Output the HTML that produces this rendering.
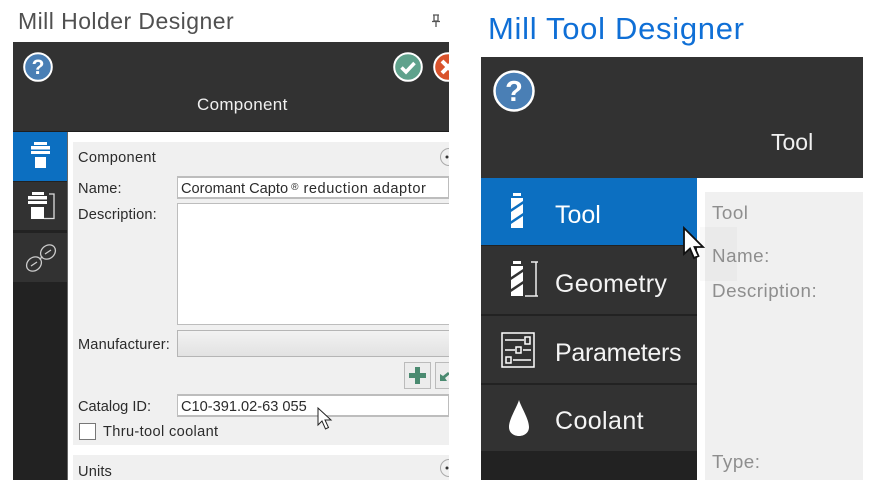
<!DOCTYPE html>
<html><head><meta charset="utf-8">
<style>
html,body{margin:0;padding:0;background:#fff}
#p{position:relative;width:885px;height:491px;overflow:hidden;background:#fff;font-family:"Liberation Sans",sans-serif}
.a{position:absolute}
.t{position:absolute;white-space:nowrap;line-height:1}
.l{font-size:14.6px;color:#2b2b2b;letter-spacing:.15px}
.r{font-size:18.8px;color:#8e8e8e;letter-spacing:.5px}
.box{position:absolute;box-sizing:border-box;background:#fff;border:1px solid #bdbdbd;border-width:2px 1px 2px 1px;}
svg{position:absolute;overflow:visible}
</style></head><body><div id="p">

<!-- LEFT -->
<div class="t" style="left:18px;top:10px;font-size:23px;color:#505050;letter-spacing:.45px">Mill Holder Designer</div>
<svg style="left:430px;top:14px" width="12" height="14" viewBox="0 0 12 14"><path d="M3 1H9M4 1V7H8V1M2 7.500H10M6 8V13" fill="none" stroke="#555" stroke-width="1.300"/></svg>

<div class="a" style="left:13px;top:42px;width:436px;height:438px;background:#fff;overflow:hidden">
  <div class="a" style="left:0;top:0;width:436px;height:90px;background:#323232;border-bottom:1px solid #1e1e1e;box-sizing:border-box"></div>
  <div class="a" style="left:0;top:90px;width:55px;height:348px;background:#222"></div>
  <div class="a" style="left:0;top:90px;width:55px;height:49px;background:#0c6fc1"></div>
  <div class="a" style="left:0;top:139px;width:55px;height:50px;background:#323232;border-top:1px solid #222;border-bottom:1px solid #222;box-sizing:border-box"></div>
  <div class="a" style="left:0;top:191px;width:55px;height:49px;background:#323232"></div>
  <div class="a" style="left:54px;top:90px;width:1px;height:348px;background:#666"></div>
  <div class="a" style="left:60px;top:100px;width:376px;height:303px;background:#f0f0f0"></div>
  <div class="a" style="left:60px;top:413px;width:376px;height:25px;background:#f0f0f0"></div>
</div>

<!-- help -->
<svg style="left:23px;top:52px" width="30" height="30" viewBox="0 0 30 30"><circle cx="15" cy="15" r="13.800" fill="#4a7fb5" stroke="#fff" stroke-width="2"/><text x="15" y="22" text-anchor="middle" font-family="Liberation Sans" font-weight="700" font-size="21" fill="#fff">?</text></svg>
<!-- ok -->
<svg style="left:393px;top:52px" width="30" height="30" viewBox="0 0 30 30"><circle cx="15" cy="15" r="13.800" fill="#5fa28c" stroke="#fff" stroke-width="2"/><path d="M8.500 15.500L13 20L21.500 11" fill="none" stroke="#fff" stroke-width="3.500"/></svg>
<!-- cancel -->
<div class="a" style="left:433px;top:52px;width:16px;height:30px;overflow:hidden"><svg style="left:0;top:0" width="30" height="30" viewBox="0 0 30 30"><circle cx="15" cy="15" r="13.800" fill="#d9532c" stroke="#fff" stroke-width="2"/><path d="M9 9L21 21M21 9L9 21" stroke="#fff" stroke-width="4"/></svg></div>

<div class="t" style="left:197px;top:96px;font-size:17px;color:#f0f0f0;letter-spacing:.3px">Component</div>

<!-- left tabs icons -->
<svg style="left:28px;top:140px" width="26" height="32" viewBox="0 0 26 32" fill="#fff"><rect x="6" y="2" width="13" height="3"/><rect x="3" y="6" width="19" height="3.500"/><rect x="3" y="11" width="19" height="3"/><rect x="7" y="17" width="11" height="11"/></svg>
<svg style="left:26px;top:190px" width="32" height="32" viewBox="0 0 32 32" fill="#fff"><rect x="6" y="2" width="12" height="3"/><rect x="2" y="6" width="19" height="3.500"/><rect x="2" y="11" width="19" height="3"/><rect x="5" y="17" width="13" height="12"/><path d="M23 4H28V28.500H18" fill="none" stroke="#ddd" stroke-width="1.300"/></svg>
<svg style="left:24px;top:240px" width="34" height="36" viewBox="0 0 34 36" fill="none" stroke="#ccc" stroke-width="1.300"><ellipse cx="10" cy="24" rx="8" ry="6.500" transform="rotate(-40 10 24)"/><ellipse cx="24" cy="12" rx="8" ry="6.500" transform="rotate(-40 24 12)"/><path d="M7 26L13 22M16 20L18 16M21 14L27 10"/></svg>

<!-- left form -->
<div class="t l" style="left:78px;top:151px;letter-spacing:.3px">Component</div>
<svg style="left:442px;top:148px" width="7" height="18" viewBox="0 0 7 18"><path d="M7 .500A8.500 8.500 0 0 0 7 17.500" fill="#f0f0f0" stroke="#aaa"/><circle cx="5" cy="9" r="1.500" fill="#333"/></svg>
<div class="t l" style="left:78px;top:182px">Name:</div>
<div class="box" style="left:177px;top:176px;width:272px;height:23px"></div>
<div class="t l" style="left:181px;top:182px;letter-spacing:0">Coromant Capto<span style="font-size:10px;position:relative;top:-3px;padding:0 5px 0 3px">®</span><span style="letter-spacing:.55px">reduction adaptor</span></div>
<div class="t l" style="left:78px;top:208px">Description:</div>
<div class="a" style="left:177px;top:203px;width:272px;height:122px;box-sizing:border-box;background:#fff;border:1px solid #bdbdbd;border-right:0"></div>
<div class="t l" style="left:78px;top:338px">Manufacturer:</div>
<div class="a" style="left:177px;top:330px;width:272px;height:27px;box-sizing:border-box;background:linear-gradient(#f2f2f2,#e2e2e2);border:1px solid #b5b5b5;border-right:0"></div>
<div class="a" style="left:404px;top:362px;width:27px;height:27px;box-sizing:border-box;background:#ececec;border:1px solid #bbb"></div>
<svg style="left:408px;top:366px" width="19" height="19" viewBox="0 0 19 19"><path d="M7 1h5v6h6v5h-6v6H7v-6H1V7h6z" fill="#4a8a70"/></svg>
<div class="a" style="left:435px;top:362px;width:14px;height:27px;box-sizing:border-box;background:#ececec;border:1px solid #bbb;border-right:0;overflow:hidden"><svg style="left:3px;top:7px" width="11" height="12" viewBox="0 0 11 12"><path d="M1 4L4 6L9 2L11 4L6 8L8 11H1z" fill="#4a8a70"/></svg></div>
<div class="t l" style="left:78px;top:400px;letter-spacing:0">Catalog ID:</div>
<div class="box" style="left:177px;top:394px;width:272px;height:23px"></div>
<div class="t l" style="left:181px;top:400px;letter-spacing:0">C10-391.02-63 055</div>
<div class="a" style="left:79px;top:423px;width:17px;height:17px;box-sizing:border-box;background:#fff;border:1px solid #777"></div>
<div class="t l" style="left:103px;top:425px;letter-spacing:.35px">Thru-tool coolant</div>
<div class="t l" style="left:78px;top:465px">Units</div>
<svg style="left:442px;top:459px" width="7" height="18" viewBox="0 0 7 18"><path d="M7 .500A8.500 8.500 0 0 0 7 17.500" fill="#f0f0f0" stroke="#aaa"/><circle cx="5" cy="9" r="1.500" fill="#333"/></svg>
<svg style="left:317px;top:407px" width="17" height="24" viewBox="0 0 17 24"><path d="M1 1V18L5 14L8.500 22L11.500 20.500L8 13H14z" fill="#fff" stroke="#222" stroke-width="1"/></svg>

<!-- RIGHT -->
<div class="t" style="left:488px;top:13px;font-size:31px;color:#0f6fd6;letter-spacing:.7px">Mill Tool Designer</div>
<div class="a" style="left:481px;top:57px;width:382px;height:423px;background:#fff;overflow:hidden">
  <div class="a" style="left:0;top:0;width:382px;height:121px;background:#323232"></div>
  <div class="a" style="left:0;top:121px;width:216px;height:302px;background:#222"></div>
  <div class="a" style="left:0;top:121px;width:216px;height:67px;background:#0c6fc1"></div>
  <div class="a" style="left:0;top:189px;width:216px;height:68px;background:#323232"></div>
  <div class="a" style="left:0;top:259px;width:216px;height:67px;background:#323232"></div>
  <div class="a" style="left:0;top:328px;width:216px;height:66px;background:#323232"></div>
  <div class="a" style="left:224px;top:135px;width:158px;height:288px;background:#f0f0f0"></div>
</div>
<svg style="left:493px;top:70px" width="42" height="42" viewBox="0 0 42 42"><circle cx="21" cy="21" r="19.500" fill="#4a7fb5" stroke="#fff" stroke-width="2.500"/><text x="21" y="31" text-anchor="middle" font-family="Liberation Sans" font-weight="700" font-size="29" fill="#fff">?</text></svg>
<div class="t" style="left:771px;top:131px;font-size:23px;color:#f0f0f0">Tool</div>

<svg style="left:510px;top:192px" width="14" height="38" viewBox="0 0 14 38" fill="#fff"><rect x="3" y="1" width="8" height="3"/><path d="M1 6H13V9L1 17zM13 12V21L1 29V20zM13 24V36H1V32z"/></svg>
<div class="t" style="left:555px;top:203px;font-size:25px;color:#fff">Tool</div>

<svg style="left:510px;top:260px" width="30" height="38" viewBox="0 0 30 38" fill="#fff"><rect x="3" y="1" width="8" height="3"/><path d="M1 6H13V9L1 17zM13 12V21L1 29V20zM13 24V36H1V32z"/><path d="M21 2H28M26 2V36M15 36H28" fill="none" stroke="#eee" stroke-width="1.500"/></svg>
<div class="t" style="left:555px;top:272px;font-size:25px;color:#f4f4f4;letter-spacing:.3px">Geometry</div>

<svg style="left:501px;top:332px" width="34" height="36" viewBox="0 0 34 36" fill="none" stroke="#fff" stroke-width="1.500"><rect x="1" y="1" width="32" height="34"/><path d="M4 8H23M4 18H14M22 18H30M12 28H30"/><rect x="24" y="5" width="5" height="7"/><rect x="15" y="15" width="5" height="6"/><rect x="5" y="25" width="5" height="6"/></svg>
<div class="t" style="left:555px;top:341px;font-size:25px;color:#f4f4f4;letter-spacing:-.3px">Parameters</div>

<svg style="left:508px;top:399px" width="22" height="38" viewBox="0 0 22 38"><path d="M11 1C13 8 21 20 21 28C21 34 16 37 11 37C6 37 1 34 1 28C1 20 9 8 11 1z" fill="#fff"/></svg>
<div class="t" style="left:555px;top:409px;font-size:25px;color:#f4f4f4;letter-spacing:.4px">Coolant</div>

<div class="a" style="left:700px;top:227px;width:37px;height:54px;background:rgba(0,0,0,.025)"></div>
<div class="t r" style="left:712px;top:204px">Tool</div>
<div class="t r" style="left:712px;top:247px">Name:</div>
<div class="t r" style="left:712px;top:282px">Description:</div>
<div class="t r" style="left:712px;top:453px">Type:</div>

<svg style="left:683px;top:227px" width="22" height="33" viewBox="0 0 22 33"><path d="M1 1V27L7 21.500L11 31L15.500 29L11.500 20H20z" fill="#fff" stroke="#111" stroke-width="1.800"/></svg>

</div></body></html>
